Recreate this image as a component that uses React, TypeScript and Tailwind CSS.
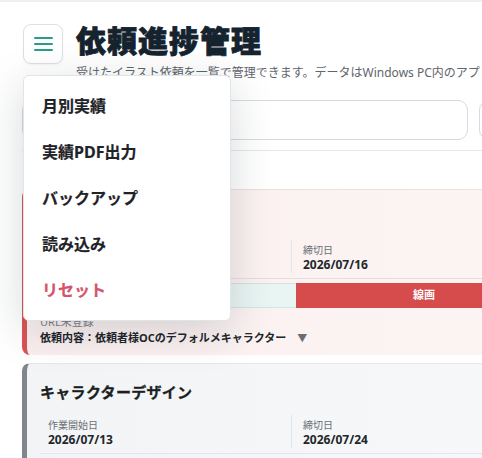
import React from "react";

const font = { fontFamily: '"Noto Sans", "Noto Sans CJK JP", sans-serif' };

function Field({ label, value, first }: { label: string; value: string; first?: boolean }) {
  return (
    <div className={first ? "pl-[8px] pt-[3px]" : "border-l border-[#e3e5e8] pl-[11px] pt-[3px]"}>
      <div className="text-[10px] leading-[14px] text-[#6b7075]">{label}</div>
      <div className="text-[12px] leading-[16px] font-bold text-[#22272c]">{value}</div>
    </div>
  );
}

export default function App() {
  const items = ["月別実績", "実績PDF出力", "バックアップ", "読み込み"];
  return (
    <div className="relative w-[482px] h-[458px] overflow-hidden bg-white" style={font}>
      <div className="h-[2px] bg-[#eef0f1]" />
      <div className="w-[820px] pl-[22px] pt-[22px]">
        <header className="flex items-start gap-[13px]">
          <div className="relative ml-[1px]">
            <button className="flex h-[40px] w-[40px] flex-col items-center justify-center gap-[4px] rounded-[8px] border border-[#dde1e4] bg-white shadow-[0_1px_2px_rgba(0,0,0,0.05)]">
              <span className="block h-[2px] w-[19px] rounded bg-[#2a9d86]" />
              <span className="block h-[2px] w-[19px] rounded bg-[#2a9d86]" />
              <span className="block h-[2px] w-[19px] rounded bg-[#2a9d86]" />
            </button>
            <div className="absolute left-0 top-[51px] z-50 w-[208px] rounded-[6px] border border-[#e2e5e8] bg-white py-[7px] shadow-[0_10px_44px_rgba(20,30,40,0.17)]">
              {items.map((t) => (
                <div key={t} className="flex h-[46px] items-center pl-[18px] text-[16px] font-bold text-[#1f2328] [-webkit-text-stroke:0.2px_#1f2328]">
                  {t}
                </div>
              ))}
              <div className="flex h-[46px] items-center pl-[18px] text-[16px] font-bold text-[#d4546c] [-webkit-text-stroke:0.2px_#d4546c]">リセット</div>
            </div>
          </div>
          <div className="-mt-[1px]">
            <h1 className="text-[30px] leading-[36px] font-black tracking-[1px] text-[#14232e] [-webkit-text-stroke:0.8px_#14232e]">依頼進捗管理</h1>
            <p className="mt-[5px] whitespace-nowrap text-[12px] leading-[18px] text-[#5f656b]">
              受けたイラスト依頼を一覧で管理できます。データはWindows PC内のアプリに保存されます。
            </p>
          </div>
        </header>

        <div className="mt-[18px] flex gap-[11px] border-b border-[#e5e8eb] pb-[10px]">
          <div className="h-[40px] w-[446px] rounded-[10px] border border-[#d6dbdf] bg-white" />
          <div className="h-[40px] w-[200px] rounded-[10px] border border-[#d6dbdf] bg-white" />
        </div>

        <div className="mt-[38px] flex flex-col gap-[8px]">
          <div className="rounded-[8px] border-t border-[#efdede] border-l-[5px] border-l-[#db5454] bg-gradient-to-r from-[#fbf0f0] to-[#fdf6f6] pl-[13px] pt-[16px] pb-[9px]">
            <div className="text-[15px] leading-[22px] font-bold text-[#1b1f23]">SD</div>
            <div className="mt-[12px] grid grid-cols-[251px_251px_251px] border-b border-[#eadcdc] pb-[5px]">
              <div className="h-[33px]" />
              <Field label="締切日" value="2026/07/16" />
              <div />
            </div>
            <div className="mt-[4px] flex h-[25px]">
              <div className="w-[256px] border-y border-[#cfe5e0] bg-[#e9f5f3]" />
              <div className="flex w-[256px] items-center justify-center bg-[#d64b4b] text-[11px] font-bold text-white">線画</div>
              <div className="w-[256px] bg-[#f3e6e6]" />
            </div>
            <div className="mt-[6px] text-[11px] leading-[16px] text-[#7b8085]">URL未登録</div>
            <div className="flex items-center text-[11px] leading-[16px] font-bold text-[#20252a]">
              依頼内容：依頼者様OCのデフォルメキャラクター
              <span className="ml-[11px] text-[10px] text-[#6a6f75]">▼</span>
            </div>
          </div>

          <div className="rounded-[8px] border-t border-[#e6e8ea] border-l-[5px] border-l-[#80868c] bg-gradient-to-r from-[#f3f4f5] to-[#f9fafb] pl-[13px] pt-[17px] pb-[30px]">
            <div className="text-[15px] leading-[22px] font-bold text-[#1b1f23] [-webkit-text-stroke:0.3px_#1b1f23] tracking-[0.3px]">キャラクターデザイン</div>
            <div className="mt-[12px] grid grid-cols-[251px_251px_251px] border-b border-[#e3e5e8] pb-[5px]">
              <Field first label="作業開始日" value="2026/07/13" />
              <Field label="締切日" value="2026/07/24" />
              <div />
            </div>
          </div>
        </div>
      </div>
    </div>
  );
}
